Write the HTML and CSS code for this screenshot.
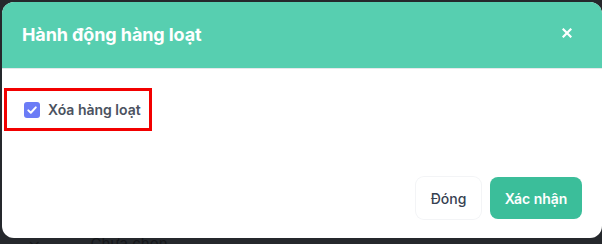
FILE: index.html
```html
<!DOCTYPE html>
<html lang="vi">
<head>
<meta charset="utf-8">
<link rel="stylesheet" href="styles.css">
</head>
<body>
<div class="backdrop">
  <div class="modal">
    <div class="modal-header">
      <h2 class="modal-title">Hành động hàng loạt</h2>
      <button class="close-btn" aria-label="close">
        <svg width="10" height="10" viewBox="0 0 10 10"><path d="M1.5 1.5 L8.5 8.5 M8.5 1.5 L1.5 8.5" stroke="#fff" stroke-width="2.2" stroke-linecap="square"/></svg>
      </button>
    </div>
    <div class="modal-body">
      <label class="check-row">
        <span class="checkbox">
          <svg width="12" height="12" viewBox="0 0 12 12"><path d="M2.3 6.4 L4.8 8.8 L9.8 3.4" fill="none" stroke="#fff" stroke-width="2" stroke-linecap="round" stroke-linejoin="round"/></svg>
        </span>
        <span class="check-label">Xóa hàng loạt</span>
      </label>
    </div>
    <div class="modal-footer">
      <button class="btn btn-light">Đóng</button>
      <button class="btn btn-primary">Xác nhận</button>
    </div>
  </div>
  <div class="under-row">
    <span class="under-icon">⌄</span>
    <span class="under-text">Chưa chọn</span>
  </div>
</div>
</body>
</html>
```
FILE: styles.css
```css
* { box-sizing: border-box; }
html, body { margin: 0; padding: 0; }
body {
  width: 602px;
  height: 244px;
  overflow: hidden;
  background: #25282c;
  font-family: Inter, "Noto Sans", sans-serif;
}
.backdrop {
  padding: 2px 0 0 2px;
  height: 244px;
}
.modal {
  width: 600px;
  height: 236px;
  background: #fff;
  border-radius: 12px;
  overflow: hidden;
  display: flex;
  flex-direction: column;
}
.modal-header {
  height: 67px;
  flex: none;
  background: #57cfb0;
  border-bottom: 1px solid #e6e8eb;
  display: flex;
  align-items: center;
  justify-content: space-between;
  padding: 0 29px 0 20px;
}
.modal-title {
  margin: 0;
  color: #fff;
  font-size: 18px;
  font-weight: 700;
  letter-spacing: -0.1px;
  position: relative;
  top: -1px;
}
.close-btn {
  border: 0;
  background: transparent;
  padding: 0;
  width: 12px;
  height: 12px;
  display: flex;
  align-items: center;
  justify-content: center;
  position: relative;
  top: -2px;
}
.modal-body {
  padding: 19px 0 0 2px;
  flex: 1;
}
.check-row {
  width: 148px;
  height: 43px;
  border: 3px solid #f20000;
  display: flex;
  align-items: center;
  gap: 8px;
  padding-left: 17px;
}
.checkbox {
  width: 16px;
  height: 16px;
  border-radius: 3px;
  background: #6b7cf6;
  display: flex;
  align-items: center;
  justify-content: center;
}
.check-label {
  font-size: 14px;
  font-weight: 600;
  color: #4b5260;
}
.modal-footer {
  display: flex;
  justify-content: flex-end;
  gap: 9px;
  padding: 0 20px 19px 0;
}
.btn {
  height: 42px;
  border: 0;
  border-radius: 8px;
  font-family: Inter, "Noto Sans", sans-serif;
  font-size: 14px;
  font-weight: 500;
  padding: 0;
  white-space: nowrap;
}
.btn-light {
  width: 65px;
  background: #fff;
  color: #374151;
  box-shadow: 0 0 0 1px #f3f4f6;
}
.btn-primary {
  width: 92px;
  background: #3bbe9a;
  color: #fff;
  font-weight: 600;
}
.under-row {
  display: flex;
  align-items: flex-start;
  gap: 50px;
  padding-left: 26px;
  height: 6px;
  overflow: hidden;
}
.under-icon {
  color: #15171a;
  font-size: 16px;
  line-height: 6px;
}
.under-text {
  color: #15171a;
  font-size: 15px;
  line-height: 14px;
  margin-top: -1px;
}
```
